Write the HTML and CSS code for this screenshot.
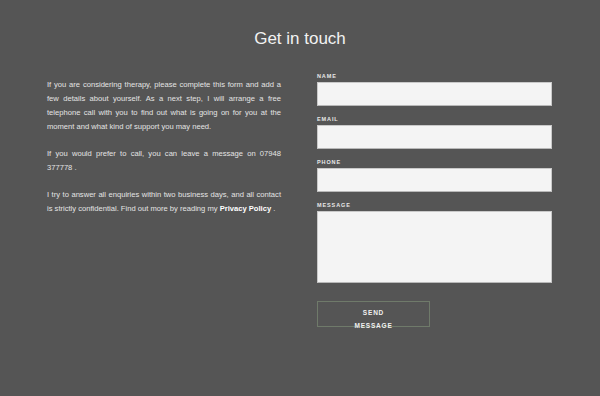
FILE: index.html
```html
<!DOCTYPE html>
<html>
<head>
<meta charset="utf-8">
<link rel="stylesheet" href="styles.css">
</head>
<body>
<main class="page">
  <h1 class="title">Get in touch</h1>
  <div class="cols">
    <div class="intro">
      <p>If you are considering therapy, please complete this form and add a few details about yourself. As a next step, I will arrange a free telephone call with you to find out what is going on for you at the moment and what kind of support you may need.</p>
      <p>If you would prefer to call, you can leave a message on 07948 377778 .</p>
      <p>I try to answer all enquiries within two business days, and all contact is strictly confidential. Find out more by reading my <a class="link" href="#">Privacy Policy</a> .</p>
    </div>
    <form class="form">
      <div class="field"><label class="label">NAME</label><input class="input" type="text"></div>
      <div class="field"><label class="label">EMAIL</label><input class="input" type="text"></div>
      <div class="field"><label class="label">PHONE</label><input class="input" type="text"></div>
      <div class="field"><label class="label">MESSAGE</label><textarea class="input textarea"></textarea></div>
      <div class="send" role="button"><span class="send-text">SEND MESSAGE</span></div>
    </form>
  </div>
</main>
</body>
</html>
```
FILE: styles.css
```css
html, body {
  margin: 0;
  padding: 0;
  background: #555555;
}
body {
  font-family: "Liberation Sans", Arial, sans-serif;
  color: #e6e6e6;
}
.page {
  padding-top: 28px;
  padding-bottom: 40px;
}
.title {
  margin: 0;
  text-align: center;
  font-weight: normal;
  font-size: 17px;
  line-height: 22px;
  color: #f2f2f2;
}
.cols {
  display: flex;
  justify-content: flex-start;
  gap: 36px;
  padding-left: 47px;
  margin-top: 22px;
}
.intro {
  width: 234px;
  padding-top: 6px;
  font-size: 7.6px;
  line-height: 14px;
  text-align: justify;
  color: #e4e4e4;
}
.intro p {
  margin: 0 0 13px 0;
}
.link {
  color: #ffffff;
  font-weight: bold;
  text-decoration: none;
}
.form {
  width: 235px;
  margin: 0;
}
.field {
  margin-bottom: 9px;
}
.label {
  display: block;
  font-size: 5.5px;
  line-height: 8px;
  font-weight: bold;
  letter-spacing: 0.9px;
  color: #e8e8e8;
  margin-bottom: 2px;
}
.input {
  display: block;
  box-sizing: border-box;
  width: 235px;
  height: 24px;
  margin: 0;
  border: 1px solid #c9c9c9;
  border-bottom-color: #b8b8b8;
  background: #f4f4f4;
  outline: none;
  padding: 0;
}
.textarea {
  height: 72px;
  resize: none;
}
.send {
  box-sizing: border-box;
  width: 113px;
  height: 26px;
  margin-top: 18px;
  padding: 5px 34px 0;
  border: 1px solid #6f7a6a;
  color: #f0f0f0;
  font-size: 6.5px;
  font-weight: bold;
  letter-spacing: 0.8px;
  line-height: 12.5px;
  text-align: center;
  cursor: pointer;
}
.send-text {
  position: relative;
  z-index: 1;
}
```
